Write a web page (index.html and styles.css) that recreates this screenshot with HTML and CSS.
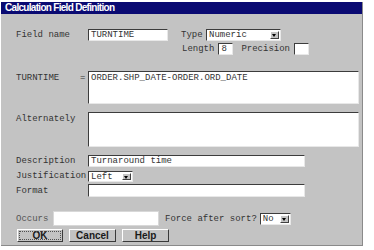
FILE: index.html
```html
<!DOCTYPE html>
<html>
<head>
<meta charset="utf-8">
<link rel="stylesheet" href="styles.css">
</head>
<body>
<div class="dialog">
  <div class="title">Calculation Field Definition</div>
  <div class="content">
    <div class="row r1">
      <span class="lbl w72">Field name</span>
      <div class="inp w80">TURNTIME</div>
      <span class="lbl type-lbl">Type</span>
      <div class="select w75"><span class="val">Numeric</span><span class="arrow"></span></div>
    </div>
    <div class="row r2">
      <span class="lbl">Length</span>
      <div class="inp w15 ml4">8</div>
      <span class="lbl ml8">Precision</span>
      <div class="inp w15 ml4"></div>
    </div>
    <div class="row r3 top">
      <span class="lbl w64 pt">TURNTIME</span>
      <span class="lbl w8 pt">=</span>
      <div class="area">ORDER.SHP_DATE-ORDER.ORD_DATE</div>
    </div>
    <div class="row r4 top">
      <span class="lbl w72 pt">Alternately</span>
      <div class="area tall"></div>
    </div>
    <div class="row r5">
      <span class="lbl w72">Description</span>
      <div class="inp w217">Turnaround time</div>
    </div>
    <div class="row r6">
      <span class="lbl w72">Justification</span>
      <div class="select w45 short"><span class="val">Left</span><span class="arrow"></span></div>
    </div>
    <div class="row r7">
      <span class="lbl w72">Format</span>
      <div class="inp w217 h13"></div>
    </div>
    <div class="row r8">
      <span class="lbl w37 light">Occurs</span>
      <div class="inp flat w106"></div>
      <span class="lbl ml6">Force after sort?</span>
      <div class="select w31 ml3"><span class="val">No</span><span class="arrow"></span></div>
    </div>
    <div class="row r9">
      <button class="btn focus">OK</button>
      <button class="btn">Cancel</button>
      <button class="btn">Help</button>
    </div>
  </div>
</div>
</body>
</html>
```

FILE: styles.css
```css
* { box-sizing: border-box; }
html, body { margin: 0; padding: 0; background: #ffffff; }
.dialog {
  margin: 2px 0 0 1px;
  width: 362px;
  height: 244px;
  background: #c3c3c3;
  border-right: 1px solid #8a8a8a;
  border-bottom: 1px solid #8a8a8a;
  overflow: hidden;
}
.title {
  height: 12px;
  background: #0a0a72;
  color: #ffffff;
  font: bold 10px/12px "Liberation Sans", Arial, sans-serif;
  letter-spacing: -0.7px;
  padding-left: 4px;
}
.content { padding-left: 15px; }
.row { display: flex; align-items: center; }
.row.top { align-items: flex-start; }
.lbl {
  font: 9px/12px "Liberation Mono", "Courier New", monospace;
  color: #333333;
  white-space: pre;
  flex: none;
}
.lbl.light { color: #555555; }
.pt { padding-top: 1px; }
.w72 { width: 72px; }
.w64 { width: 64px; }
.w8 { width: 8px; }
.w37 { width: 37px; }
.ml4 { margin-left: 4px; }
.ml8 { margin-left: 8px; }
.ml6 { margin-left: 6px; }
.ml3 { margin-left: 3px; }
.inp, .area, .select {
  background: #ffffff;
  border-top: 1px solid #3c3c3c;
  border-left: 1px solid #3c3c3c;
  border-right: 1px solid #e8e8e8;
  border-bottom: 1px solid #e8e8e8;
  font: 9px/10px "Liberation Mono", "Courier New", monospace;
  color: #333333;
  padding-left: 2px;
  height: 12px;
  flex: none;
  white-space: pre;
}
.h13 { height: 13px; }
.inp.flat { border: 1px solid #d8d8d8; height: 15px; }
.w80 { width: 80px; }
.w15 { width: 15px; }
.w217 { width: 217px; }
.w106 { width: 106px; }
.w75 { width: 75px; }
.w45 { width: 45px; }
.w31 { width: 31px; }
.select {
  display: flex;
  align-items: stretch;
  padding-right: 0;
}
.select .val { flex: 1; }
.select .arrow {
  width: 9px;
  margin: 1px 1px 1px 0;
  background: #c3c3c3;
  border-top: 1px solid #ffffff;
  border-left: 1px solid #ffffff;
  border-right: 1px solid #404040;
  border-bottom: 1px solid #404040;
  position: relative;
}
.select .arrow::after {
  content: "";
  position: absolute;
  left: 1px;
  top: 2px;
  border-left: 2.5px solid transparent;
  border-right: 2.5px solid transparent;
  border-top: 3px solid #000000;
}
.type-lbl { margin-left: 13px; width: 25px; }
.r1 { margin-top: 15px; }
.r2 { margin-top: 2px; margin-left: 166px; }
.r3 { margin-top: 16px; }
.area {
  width: 271px;
  height: 33px;
  padding-top: 1px;
}
.area.tall { height: 35px; }
.r4 { margin-top: 8px; }
.r5 { margin-top: 8px; }
.r6 { margin-top: 3px; }
.select.short { height: 11px; }
.r7 { margin-top: 2px; }
.r8 { margin-top: 14px; }
.r9 { margin-top: 3px; margin-left: 1px; gap: 6px; }
.btn {
  width: 47px;
  height: 13px;
  padding: 0;
  margin: 0;
  background: #c3c3c3;
  border-top: 1px solid #ffffff;
  border-left: 1px solid #ffffff;
  border-right: 1px solid #3a3a3a;
  border-bottom: 1px solid #3a3a3a;
  font: bold 10px/11px "Liberation Sans", Arial, sans-serif;
  color: #1a1a1a;
}
.btn.focus {
  outline: 1px dotted #505050;
  outline-offset: -3px;
  width: 46px;
}
```
